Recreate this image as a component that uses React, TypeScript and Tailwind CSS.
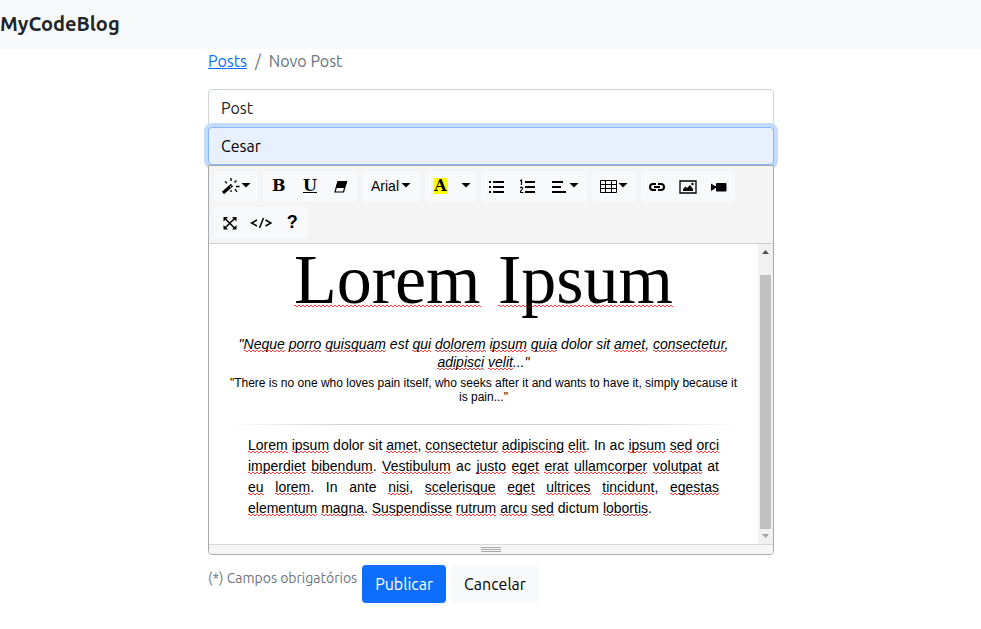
import React from 'react';

const Caret = () => (
  <svg width="10" height="8" viewBox="0 0 10 8" className="shrink-0" aria-hidden="true">
    <path d="M.5 1h9L5 5.500z" fill="currentColor" />
  </svg>
);

const Icon = ({ children, size = 16 }: { children: React.ReactNode; size?: number }) => (
  <svg width={size} height="16" viewBox={`0 0 ${size} 16`} fill="none" stroke="currentColor" className="shrink-0" aria-hidden="true">
    {children}
  </svg>
);

const Magic = () => (
  <Icon size={20}>
    <path d="M2 15 11 7" strokeWidth="3.200" />
    <path d="m8.800 9.300 1.500-1.400" stroke="#f8f9fa" strokeWidth="1" />
    <path d="m4 3.500 2 1.800M10 0v3M15.500 2.500l-2 2M15 8.500h3.500M14 11l2 3M10 12v2" strokeWidth="1.300" />
  </Icon>
);

const Eraser = () => (
  <Icon>
    <path d="M5 3.500h8.500l-3 10.500H2z" strokeWidth="1.200" />
    <path d="M5 3.500h8.500l-1.800 6H3.200z" fill="currentColor" />
  </Icon>
);

const Bullets = () => (
  <Icon>
    <path d="M0 4h2M0 9h2M0 14h2" strokeWidth="2" />
    <path d="M4 4h11M4 9h11M4 14h11" strokeWidth="2" />
  </Icon>
);

const Numbers = () => (
  <Icon>
    <path d="M5 4h10M5 9h10M5 14h10" strokeWidth="2" />
    <path d="M0 3 1.500 2V7M0 10c.5-1.200 3-1 2.500.5C2.300 11.500.5 13 0 14.500h3.500" strokeWidth="1.200" />
  </Icon>
);

const AlignLeft = () => (
  <Icon>
    <path d="M1 4h11M1 9h9M1 14h14" strokeWidth="2" />
  </Icon>
);

const Table = () => (
  <Icon size={18}>
    <path d="M.5 2.500h16v12H.5zM.5 6.500h16M.5 10.500h16M5.500 2.500v12M11.500 2.500v12" strokeWidth="1" />
  </Icon>
);

const Link = () => (
  <Icon size={18}>
    <path d="M8 6H5a3 3 0 0 0 0 6h3M10 6h3a3 3 0 0 1 0 6h-3M6 9h6" strokeWidth="2" />
  </Icon>
);

const Picture = () => (
  <Icon size={18}>
    <path d="M1 3h16v12H1z" strokeWidth="1.300" />
    <path d="M4 13v-2l2.500-2.500L8 10l3-3 3 4v2z" fill="currentColor" stroke="none" />
    <circle cx="13.500" cy="6" r="1.200" fill="currentColor" stroke="none" />
  </Icon>
);

const Video = () => (
  <Icon>
    <path d="M0 5.500 4 8v2.500L0 13zM3 8h3v2H3z" fill="currentColor" stroke="none" />
    <rect x="5" y="5" width="10.500" height="8.500" rx="1" fill="currentColor" stroke="none" />
  </Icon>
);

const Expand = () => (
  <Icon>
    <path d="M2.500 4 13 14.500M13 4 2.500 14.500" strokeWidth="1.500" />
    <path d="M1.500 3H6L1.500 7.500zM14.500 3v4.500L10 3zM1.500 15.500V11L6 15.500zM14.500 15.500H10l4.500-4.500z" fill="currentColor" stroke="none" />
  </Icon>
);

const Code = () => (
  <Icon size={22}>
    <path d="M7 6 1.500 9 7 12M15.500 6 21 9l-5.500 3M13.500 4 9.500 14" strokeWidth="1.500" />
  </Icon>
);

const Group = ({ children, className }: { children: React.ReactNode; className: string }) => (
  <div role="group" className={`flex h-[31px] rounded bg-[#f8f9fa] ${className}`}>
    {children}
  </div>
);

const Tool = ({ label, children, className = 'flex-1' }: { label: string; children: React.ReactNode; className?: string }) => (
  <button type="button" aria-label={label} className={`flex items-center justify-center pb-0.5 text-black ${className}`}>
    {children}
  </button>
);

const Letter = ({ children, className = '' }: { children: string; className?: string }) => (
  <span className={`font-['DejaVu_Serif',serif] text-base font-bold ${className}`}>{children}</span>
);

const misspelt = new Set(
  'Lorem ipsum Neque porro quisquam qui dolorem quia amet consectetur adipisci velit adipiscing elit sed orci imperdiet bibendum Vestibulum justo eget erat ullamcorper volutpat eu lorem nisi scelerisque ultrices tincidunt egestas elementum magna Suspendisse rutrum arcu lobortis Ipsum'.split(' '),
);

const squiggle =
  'bg-[conic-gradient(transparent_25%,#ff4040_0_50%,transparent_0_75%,#ff4040_0)] bg-size-[4px_2px] bg-repeat-x';

const Checked = ({ text, line = 'bg-bottom-left' }: { text: string; line?: string }) => (
  <>
    {text.split(/([A-Za-z]+)/).map((part, i) =>
      misspelt.has(part) ? <span key={i} className={`${squiggle} ${line}`}>{part}</span> : part,
    )}
  </>
);

export default function App() {
  return (
    <div className="min-h-screen bg-white font-[Ubuntu,'Noto_Sans',sans-serif] text-base text-[#212529]">
      <header className="bg-[#f8f9fa] pt-[9px] pb-[10px]">
        <a href="#" className="block text-xl leading-[30px] font-bold">MyCodeBlog</a>
      </header>
      <main className="mx-auto max-w-[567px] pl-px">
        <nav aria-label="breadcrumb" className="mb-4">
          <ol className="flex gap-2 leading-6 text-[#6c757d]">
            <li><a href="#" className="text-[#0d6efd] underline">Posts</a></li>
            <li aria-hidden="true">/</li>
            <li>Novo Post</li>
          </ol>
        </nav>
        <form>
          <input aria-label="Título" defaultValue="Post" className="block h-[38px] w-full rounded border border-[#ced4da] px-3 outline-none" />
          <input aria-label="Autor" defaultValue="Cesar" className="relative block h-[38px] w-full rounded border border-[#86b7fe] bg-[#e8f0fe] px-3 text-black ring-4 ring-[#c2dbfe] outline-none" />
          <div className="relative overflow-hidden rounded-b border border-[#a9a9a9] font-['Liberation_Sans',Arial,sans-serif]">
            <div className="flex flex-wrap gap-[5px] border-b border-[#d0d0d0] bg-[#f4f4f4] p-[5px] text-sm">
              <Group className="w-11"><Tool label="Estilo"><Magic /><Caret /></Tool></Group>
              <Group className="w-[94px]">
                <Tool label="Negrito"><Letter>B</Letter></Tool>
                <Tool label="Sublinhado"><Letter className="underline">U</Letter></Tool>
                <Tool label="Limpar formatação"><Eraser /></Tool>
              </Group>
              <Group className="w-[58px]"><Tool label="Fonte" className="flex-1 gap-0.5">Arial<Caret /></Tool></Group>
              <Group className="w-[51px]">
                <Tool label="Cor"><Letter className="bg-[#ffff00] px-px leading-4">A</Letter></Tool>
                <Tool label="Mais cores" className="w-5"><Caret /></Tool>
              </Group>
              <Group className="w-[106px]">
                <Tool label="Lista"><Bullets /></Tool>
                <Tool label="Lista numerada"><Numbers /></Tool>
                <Tool label="Parágrafo" className="w-11 gap-0.5"><AlignLeft /><Caret /></Tool>
              </Group>
              <Group className="w-11"><Tool label="Tabela"><Table /><Caret /></Tool></Group>
              <Group className="w-[94px]">
                <Tool label="Link"><Link /></Tool>
                <Tool label="Imagem"><Picture /></Tool>
                <Tool label="Vídeo"><Video /></Tool>
              </Group>
              <Group className="w-[94px]">
                <Tool label="Tela cheia"><Expand /></Tool>
                <Tool label="Código"><Code /></Tool>
                <Tool label="Ajuda"><span className="text-lg font-bold">?</span></Tool>
              </Group>
            </div>
            <div className="flex h-[300px]">
              <div className="min-w-0 flex-1 px-5 text-center text-sm text-black">
                <h1 className="font-['Liberation_Serif',serif] text-[70px] leading-[72px]">
                  <Checked text="Lorem Ipsum" line="bg-[position:left_bottom_11px]" />
                </h1>
                <h4 className="mt-[19px] leading-[18px] italic">
                  <Checked text={'"Neque porro quisquam est qui dolorem ipsum quia dolor sit amet, consectetur, adipisci velit..."'} />
                </h4>
                <h5 className="mt-[5px] text-xs leading-[14px]">
                  "There is no one who loves pain itself, who seeks after it and wants to have it, simply because it is pain..."
                </h5>
                <hr className="mt-5 h-px border-0 bg-[linear-gradient(to_right,transparent,#cccccc_25%,#cccccc_75%,transparent)]" />
                <p className="mx-[19px] mt-[10px] text-justify leading-[21px]">
                  <Checked text="Lorem ipsum dolor sit amet, consectetur adipiscing elit. In ac ipsum sed orci imperdiet bibendum. Vestibulum ac justo eget erat ullamcorper volutpat at eu lorem. In ante nisi, scelerisque eget ultrices tincidunt, egestas elementum magna. Suspendisse rutrum arcu sed dictum lobortis." />
                </p>
              </div>
              <div className="flex w-[15px] flex-col items-center bg-[#f1f1f1]" aria-hidden="true">
                <svg width="15" height="31" viewBox="0 0 15 31"><path d="M4 10h7L7.500 6z" fill="#505050" /></svg>
                <div className="w-[11px] flex-1 bg-[#c1c1c1]" />
                <svg width="15" height="15" viewBox="0 0 15 15"><path d="M4 5h7L7.500 9z" fill="#a3a3a3" /></svg>
              </div>
            </div>
            <div className="flex h-[10px] flex-col items-center gap-px border-t border-[#d8d8d8] bg-[#f5f5f5] pt-0.5" aria-hidden="true">
              <div className="h-px w-5 bg-[#a9a9a9]" />
              <div className="h-px w-5 bg-[#a9a9a9]" />
              <div className="h-px w-5 bg-[#a9a9a9]" />
            </div>
          </div>
          <div className="mt-[10px] flex items-start gap-[5px]">
            <small className="pt-[3px] text-sm leading-[21px] text-[#6c757d]">(*) Campos obrigatórios</small>
            <button type="submit" className="h-[38px] rounded bg-[#0d6efd] px-[13px] text-white">Publicar</button>
            <button type="button" className="h-[38px] rounded bg-[#f8f9fa] px-[13px] text-black">Cancelar</button>
          </div>
        </form>
      </main>
    </div>
  );
}
